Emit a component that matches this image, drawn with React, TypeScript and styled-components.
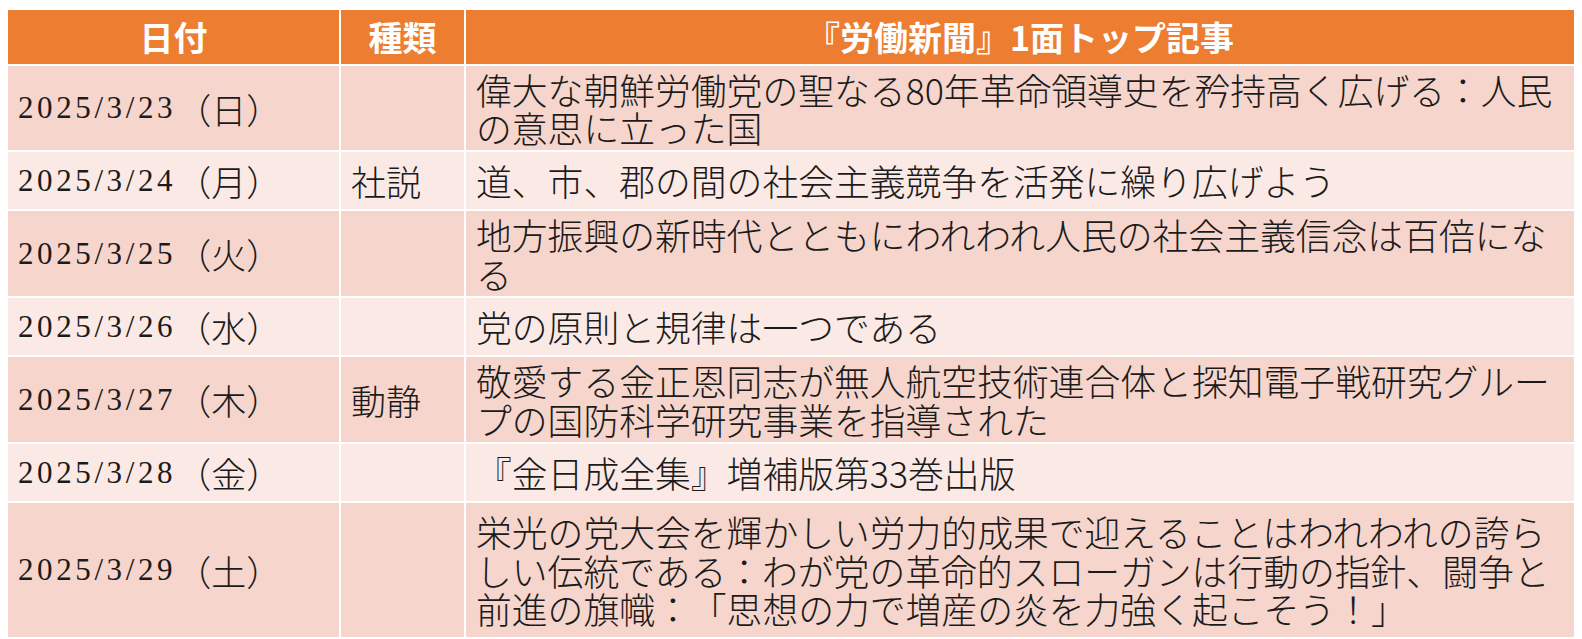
import React from "react";
import styled, { createGlobalStyle } from "styled-components";

const Global = createGlobalStyle`
  html, body { background: #ffffff; }
  body {
    margin: 8px;
    font-family: "Noto Sans CJK JP", "Noto Sans", sans-serif;
    color: #1b1b1b;
  }
`;

type Tone = "dark" | "light";

const Table = styled.div`
  margin-top: 2px;
  width: 1566px;
  display: flex;
  flex-direction: column;
  gap: 2px;
`;

const Row = styled.div<{ $h: number }>`
  display: grid;
  grid-template-columns: 331px 123px 1fr;
  gap: 2px;
  min-height: ${(p) => p.$h}px;
`;

const HeadCell = styled.div`
  background: #ed7d31;
  color: #ffffff;
  font-family: "Noto Sans CJK JP", sans-serif;
  font-weight: 700;
  font-size: 34px;
  line-height: 40px;
  display: flex;
  align-items: center;
  justify-content: center;
  text-spacing-trim: space-all;
`;

const Cell = styled.div<{ $tone: Tone }>`
  background: ${(p) => (p.$tone === "dark" ? "#f6d5cc" : "#fae9e5")};
  display: flex;
  align-items: center;
  padding: 3px 10px;
  box-sizing: border-box;
`;

const DateNum = styled.span`
  font-family: "Liberation Serif", serif;
  font-size: 31px;
  letter-spacing: 3.6px;
`;

const Weekday = styled.span`
  font-family: "Noto Sans CJK JP", sans-serif;
  font-weight: 300;
  font-size: 35px;
  text-spacing-trim: space-all;
`;

const KindText = styled.span`
  font-family: "Noto Sans CJK JP", sans-serif;
  font-weight: 300;
  font-size: 35px;
  line-height: 38px;
`;

const Title = styled.div`
  font-family: "Noto Sans CJK JP", sans-serif;
  font-weight: 300;
  font-size: 35.8px;
  line-height: 38.5px;
  text-spacing-trim: space-all;
  width: 100%;
`;

const rows: { date: string; wd: string; kind: string; title: string; h: number; tone: Tone }[] = [
  {
    date: "2025/3/23",
    wd: "日",
    kind: "",
    title: "偉大な朝鮮労働党の聖なる80年革命領導史を矜持高く広げる：人民の意思に立った国",
    h: 84,
    tone: "dark",
  },
  {
    date: "2025/3/24",
    wd: "月",
    kind: "社説",
    title: "道、市、郡の間の社会主義競争を活発に繰り広げよう",
    h: 55,
    tone: "light",
  },
  {
    date: "2025/3/25",
    wd: "火",
    kind: "",
    title: "地方振興の新時代とともにわれわれ人民の社会主義信念は百倍になる",
    h: 85,
    tone: "dark",
  },
  {
    date: "2025/3/26",
    wd: "水",
    kind: "",
    title: "党の原則と規律は一つである",
    h: 54,
    tone: "light",
  },
  {
    date: "2025/3/27",
    wd: "木",
    kind: "動静",
    title: "敬愛する金正恩同志が無人航空技術連合体と探知電子戦研究グループの国防科学研究事業を指導された",
    h: 85,
    tone: "dark",
  },
  {
    date: "2025/3/28",
    wd: "金",
    kind: "",
    title: "『金日成全集』増補版第33巻出版",
    h: 55,
    tone: "light",
  },
  {
    date: "2025/3/29",
    wd: "土",
    kind: "",
    title:
      "栄光の党大会を輝かしい労力的成果で迎えることはわれわれの誇らしい伝統である：わが党の革命的スローガンは行動の指針、闘争と前進の旗幟：「思想の力で増産の炎を力強く起こそう！」",
    h: 134,
    tone: "dark",
  },
];

export default function App() {
  return (
    <>
      <Global />
      <Table lang="ja">
        <Row $h={54}>
          <HeadCell>日付</HeadCell>
          <HeadCell>種類</HeadCell>
          <HeadCell>『労働新聞』1面トップ記事</HeadCell>
        </Row>
        {rows.map((r) => (
          <Row key={r.date} $h={r.h}>
            <Cell $tone={r.tone}>
              <DateNum>{r.date}</DateNum>
              <Weekday>（{r.wd}）</Weekday>
            </Cell>
            <Cell $tone={r.tone}>
              <KindText>{r.kind}</KindText>
            </Cell>
            <Cell $tone={r.tone}>
              <Title>{r.title}</Title>
            </Cell>
          </Row>
        ))}
      </Table>
    </>
  );
}
